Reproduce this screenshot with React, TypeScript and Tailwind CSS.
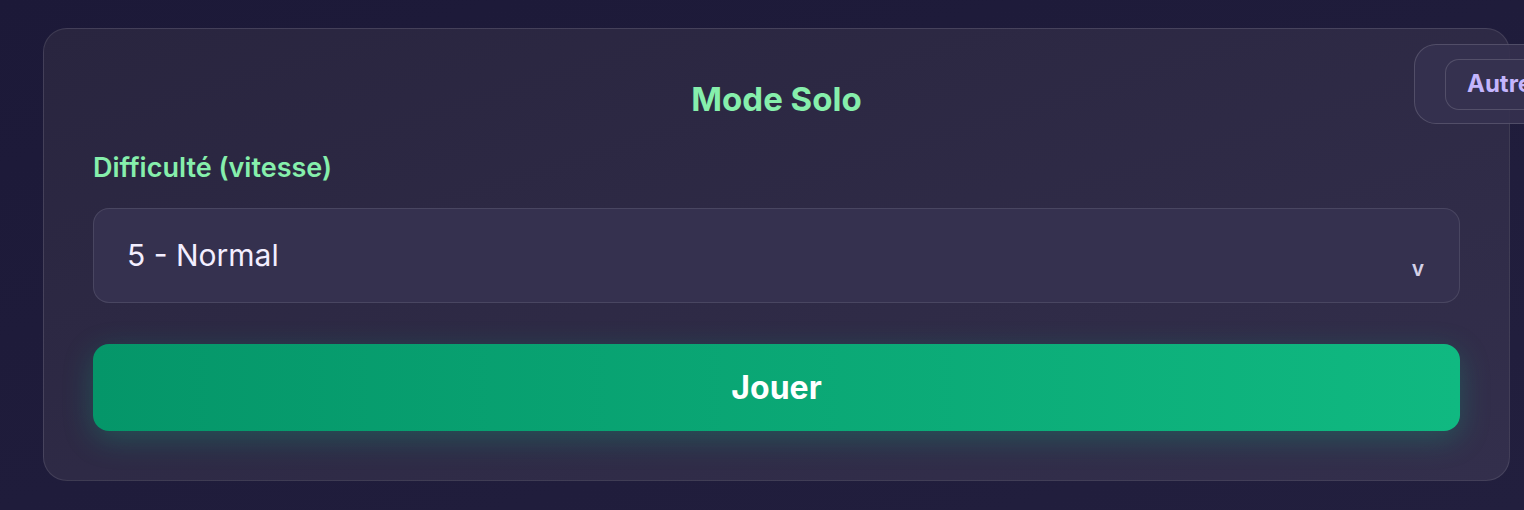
import { useState } from 'react';

const levels = ['1 - Très lent', '2 - Lent', '3 - Facile', '4 - Tranquille', '5 - Normal', '6 - Rapide', '7 - Très rapide'];

export default function App() {
  const [level, setLevel] = useState('5 - Normal');

  return (
    <div
      className="relative min-h-[510px] w-full overflow-hidden bg-gradient-to-br from-[#1c1938] to-[#221f3e] pt-[28px] pl-[43px] pr-[14px]"
      style={{ fontFamily: 'Inter, "Noto Sans", sans-serif' }}
    >
      {/* Solo card */}
      <div className="w-[1467px] rounded-[24px] border border-white/10 bg-gradient-to-br from-[#29253f] to-[#332f4c] px-[49px] pt-[50px] pb-[49px]">
        <h2 className="text-center text-[33px] font-bold leading-[40px] text-[#86efac]">Mode Solo</h2>

        <label className="mt-[32px] block text-[27px] font-semibold leading-[34px] text-[#86efac]">
          Difficulté (vitesse)
        </label>

        <div className="relative mt-[23px]">
          <select
            value={level}
            onChange={e => setLevel(e.target.value)}
            className="h-[95px] w-full appearance-none rounded-[16px] border border-white/10 bg-[#35314f] px-[33px] text-[30px] text-[#f3eeff] outline-none"
          >
            {levels.map(l => (
              <option key={l} value={l}>
                {l}
              </option>
            ))}
          </select>
          <span className="pointer-events-none absolute right-[36px] top-[50px] text-[21px] font-semibold leading-none text-[#d4d0e6]">
            v
          </span>
        </div>

        <button className="mt-[41px] h-[87px] w-full rounded-[16px] bg-gradient-to-r from-[#059669] to-[#10b981] text-[32px] font-bold text-white shadow-[0_8px_30px_rgba(16,185,129,0.28)]">
          Jouer
        </button>
      </div>

      {/* Floating tab over the card corner */}
      <div className="absolute left-[1414px] top-[44px] flex h-[80px] w-[140px] items-center rounded-[22px] border border-white/15 bg-[#35314f]/90 pl-[30px]">
        <button className="flex h-[51px] w-[120px] items-center rounded-[14px] border border-white/15 bg-[#35314f] pl-[21px] text-[24px] font-bold text-[#c4b5fd]">
          Autres
        </button>
      </div>
    </div>
  );
}
